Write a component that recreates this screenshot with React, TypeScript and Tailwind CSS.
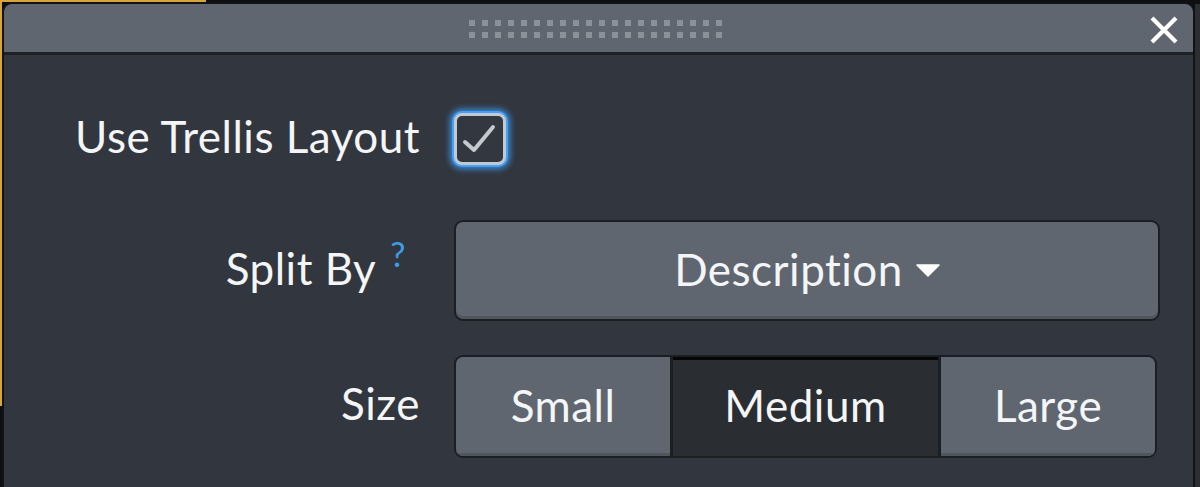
import React, { useState } from 'react';

const FONT = { fontFamily: 'Lato, "Open Sans", sans-serif' };

const SIZES = ['Small', 'Medium', 'Large'] as const;

function GripDots() {
  return (
    <div className="grid grid-cols-[repeat(20,6px)] gap-x-[7px] gap-y-[6px]">
      {Array.from({ length: 40 }).map((_, i) => (
        <span key={i} className="h-[6px] w-[6px] bg-[#8b9199]" />
      ))}
    </div>
  );
}

export default function App() {
  const [size, setSize] = useState<(typeof SIZES)[number]>('Medium');
  const [trellis, setTrellis] = useState(true);

  return (
    <div className="relative flex h-[487px] w-[1200px] overflow-hidden bg-[#0e0f11] pl-[2px] pt-[2px]" style={FONT}>
      {/* highlight edge of the element behind the panel */}
      <span className="absolute left-0 top-0 h-[2px] w-[206px] bg-[#d9a63a]" />
      <span className="absolute left-0 top-0 h-[406px] w-[2px] bg-[#d9a63a]" />

      <div className="flex w-[1193px] flex-col overflow-hidden rounded-t-[10px] border-2 border-b-0 border-[#121315]">
        <div className="relative flex h-[51px] items-center justify-center border-b-[3px] border-[#1d2024] bg-[#5f6670] pt-[2px]">
          <div className="-ml-[6px]">
            <GripDots />
          </div>
          <button className="absolute right-[15px] top-[12px] h-[28px] w-[28px]">
            <svg viewBox="0 0 28 28" className="h-[28px] w-[28px]">
              <path d="M2 2 L26 26 M26 2 L2 26" stroke="#ffffff" strokeWidth="4.2" />
            </svg>
          </button>
        </div>

        <div className="flex-1 bg-[#32363e] pr-[33px] pt-[58px] text-[44px] tracking-[0.5px] text-[#f4f5f7]">
          <div className="grid grid-cols-[416px_1fr] items-center gap-x-[34px]">
            <div className="-mt-[6px] text-right leading-none">Use Trellis Layout</div>
            <div>
              <button
                onClick={() => setTrellis(!trellis)}
                className="flex h-[52px] w-[52px] items-center justify-center rounded-[8px] border-[3px] border-[#c5c9cf] bg-[#33373f] shadow-[0_0_0_2px_#3fa2ff,0_0_6px_4px_#3fa2ffcc]"
              >
                {trellis && (
                  <svg viewBox="0 0 46 46" className="h-[46px] w-[46px]">
                    <path d="M8 26 L17 34 L36 11" fill="none" stroke="#c5c9cf" strokeWidth="4" strokeLinecap="round" strokeLinejoin="round" />
                  </svg>
                )}
              </button>
            </div>

            <div className="mt-[50px] flex justify-end pr-[14px] leading-none">
              <span>Split By</span>
              <span className="-mt-[9px] ml-[14px] text-[34px] text-[#3d9de8]">?</span>
            </div>
            <div className="mt-[55px]">
              <button className="flex h-[101px] w-full items-center justify-center gap-[13px] rounded-[9px] border-2 border-[#1b1e22] bg-[#5f6670] shadow-[inset_0_-3px_0_#50565f]">
                <span className="-mt-[4px] leading-none">Description</span>
                <svg viewBox="0 0 24 13" className="h-[13px] w-[24px]">
                  <path d="M1 1 H23 L12 12 Z" fill="#ffffff" stroke="#ffffff" strokeWidth="1.5" strokeLinejoin="round" />
                </svg>
              </button>
            </div>

            <div className="mt-[34px] pb-[8px] text-right leading-none">Size</div>
            <div className="mt-[34px]">
              <div className="flex h-[103px] w-[703px] overflow-hidden rounded-[9px] border-2 border-[#1b1e22]">
                {SIZES.map((s, i) => {
                  const active = s === size;
                  const widths = ['w-[214px]', 'w-[268px]', 'flex-1'];
                  return (
                    <button
                      key={s}
                      onClick={() => setSize(s)}
                      className={`${widths[i]} flex items-center justify-center leading-none ${i > 0 ? 'border-l-[3px] border-[#1b1e22]' : ''} ${
                        active
                          ? 'bg-[#2a2d31] shadow-[inset_0_3px_0_#050607]'
                          : 'bg-[#5f6670] shadow-[inset_0_-3px_0_#50565f]'
                      }`}
                    >
                      <span className="-mt-[4px]">{s}</span>
                    </button>
                  );
                })}
              </div>
            </div>
          </div>
        </div>
      </div>
      <div className="mt-[2px] flex-1 bg-[#2b2e33]" />
    </div>
  );
}
